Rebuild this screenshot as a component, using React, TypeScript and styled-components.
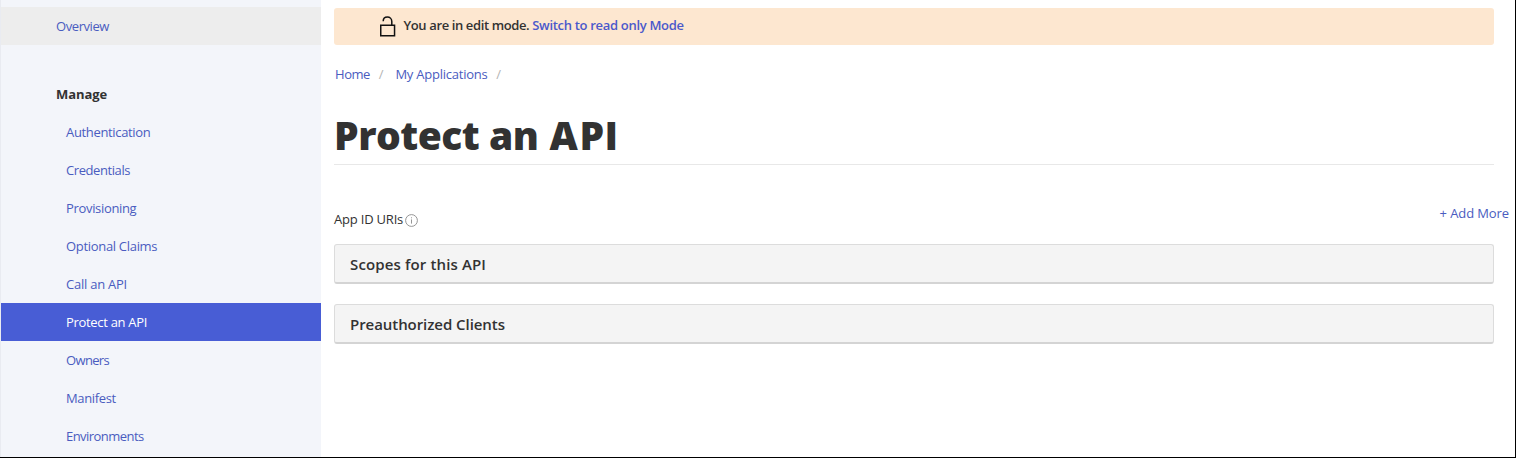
import React from "react";
import styled, { createGlobalStyle } from "styled-components";

const GlobalStyle = createGlobalStyle`
  * { box-sizing: border-box; }
  body {
    margin: 0;
    background: #fff;
    color: #323232;
    font-family: "Open Sans", "Noto Sans", sans-serif;
    font-size: 13px;
    overflow: hidden;
  }
`;

const Page = styled.div`
  display: flex;
  width: 1516px;
  height: 458px;
  overflow: hidden;
  border-right: 1px solid #000;
  border-bottom: 1px solid #000;
`;

const Sidebar = styled.nav`
  flex: 0 0 321px;
  padding-top: 7px;
  background: #f3f5fa;
  border-left: 1px solid #e9ebf1;
`;

const NavLink = styled.a<{ $ls?: number; $top?: boolean; $active?: boolean }>`
  display: flex;
  align-items: center;
  height: 38px;
  padding-left: ${(p) => (p.$top ? 55 : 65)}px;
  background: ${(p) => (p.$active ? "#485dd5" : p.$top ? "#ededed" : "transparent")};
  color: ${(p) => (p.$active ? "#fff" : "#4a5cc0")};
  letter-spacing: ${(p) => p.$ls ?? 0}px;
  white-space: nowrap;
`;

const NavHeading = styled.div`
  display: flex;
  align-items: center;
  height: 38px;
  margin-top: 30px;
  padding-left: 55px;
  font-weight: 700;
  letter-spacing: -0.05px;
`;

const Main = styled.main`
  flex: 1;
  padding: 8px 0 0 13px;
`;

const Column = styled.div`
  width: 1160px;
`;

const Banner = styled.div`
  display: flex;
  align-items: center;
  height: 37px;
  padding: 0 0 3px 45px;
  border-radius: 3px;
  background: #fde7d0;
  font-weight: 580;
  white-space: pre;
`;

const LockIcon = styled.svg`
  margin: 3px 7.5px 0 0;
`;

const BannerText = styled.span`
  letter-spacing: -0.38px;
`;

const BannerLink = styled.a`
  color: #4b59cb;
  letter-spacing: -0.31px;
`;

const Breadcrumb = styled.div`
  display: flex;
  align-items: center;
  height: 20px;
  margin-top: 19px;
  padding-left: 1px;
`;

const Crumb = styled.a<{ $ls?: number }>`
  color: #4a5cc0;
  letter-spacing: ${(p) => p.$ls ?? 0}px;
`;

const Slash = styled.span`
  margin: 0 12px 0 8.7px;
  color: #b4b4b4;
`;

const Title = styled.h1`
  height: 81px;
  margin: 0;
  padding-top: 22px;
  border-bottom: 1px solid #e8e8e8;
  font-size: 39px;
  line-height: 58px;
  font-weight: 800;
  letter-spacing: -0.5px;
`;

const Acronym = styled.span`
  margin-left: 1.5px;
  letter-spacing: 1.7px;
`;

const PlainCapital = styled.span`
  font-family: Inter, sans-serif;
  font-size: 0.98em;
  font-weight: 900;
  line-height: 1;
`;

const FieldRow = styled.div`
  display: flex;
  justify-content: space-between;
  width: 1175px;
  height: 79px;
`;

const FieldLabel = styled.label`
  display: flex;
  align-items: center;
  height: 20px;
  margin-top: 44px;
  letter-spacing: -0.2px;
`;

const InfoIcon = styled.svg`
  margin: 3px 0 0 2px;
`;

const AddLink = styled.a`
  height: 20px;
  margin-top: 38px;
  line-height: 20px;
  color: #4a5cc0;
  letter-spacing: -0.1px;
`;

const Panel = styled.section`
  display: flex;
  align-items: center;
  height: 40px;
  margin-bottom: 20px;
  padding-left: 15px;
  border: 1px solid #dcdcdc;
  border-bottom: 2px solid #d4d4d4;
  border-radius: 3px;
  background: #f4f4f4;
  font-size: 15px;
  font-weight: 580;
`;

const PanelTitle = styled.span<{ $ls: number }>`
  letter-spacing: ${(p) => p.$ls}px;
`;

const items: { label: string; ls: number }[] = [
  { label: "Authentication", ls: -0.34 },
  { label: "Credentials", ls: -0.42 },
  { label: "Provisioning", ls: -0.33 },
  { label: "Optional Claims", ls: -0.31 },
  { label: "Call an API", ls: -0.24 },
  { label: "Protect an API", ls: -0.31 },
  { label: "Owners", ls: -0.65 },
  { label: "Manifest", ls: -0.35 },
  { label: "Environments", ls: -0.54 },
];

export default function App() {
  return (
    <>
      <GlobalStyle />
      <Page>
        <Sidebar>
          <NavLink $top $ls={-0.42}>Overview</NavLink>
          <NavHeading>Manage</NavHeading>
          {items.map((item) => (
            <NavLink key={item.label} $ls={item.ls} $active={item.label === "Protect an API"}>
              {item.label}
            </NavLink>
          ))}
        </Sidebar>
        <Main>
          <Column>
            <Banner>
              <LockIcon width="17" height="21" viewBox="0 0 17 21" fill="none" stroke="#111" strokeWidth="1.5">
                <rect x="1.75" y="9.25" width="13.8" height="10.5" />
                <path d="M4.2 5.2C4.2 2.8 6 1.1 8.4 1.1S12.8 2.9 12.8 5.4V9" />
              </LockIcon>
              <BannerText>You are in edit mode. </BannerText>
              <BannerLink>Switch to read only Mode</BannerLink>
            </Banner>
            <Breadcrumb>
              <Crumb $ls={-0.45}>Home</Crumb>
              <Slash>/</Slash>
              <Crumb $ls={-0.24}>My Applications</Crumb>
              <Slash>/</Slash>
            </Breadcrumb>
            <Title>
              Protect an <Acronym>AP<PlainCapital>I</PlainCapital></Acronym>
            </Title>
            <FieldRow>
              <FieldLabel>
                App ID URIs
                <InfoIcon width="13" height="13" viewBox="0 0 13 13" fill="none" stroke="#8a8a8a" strokeWidth="0.9">
                  <circle cx="6.5" cy="6.5" r="5.9" />
                  <path d="M6.5 5.4V9.6M6.5 3.3V4.3" />
                </InfoIcon>
              </FieldLabel>
              <AddLink>+ Add More</AddLink>
            </FieldRow>
            <Panel><PanelTitle $ls={0.13}>Scopes for this API</PanelTitle></Panel>
            <Panel><PanelTitle $ls={-0.06}>Preauthorized Clients</PanelTitle></Panel>
          </Column>
        </Main>
      </Page>
    </>
  );
}
